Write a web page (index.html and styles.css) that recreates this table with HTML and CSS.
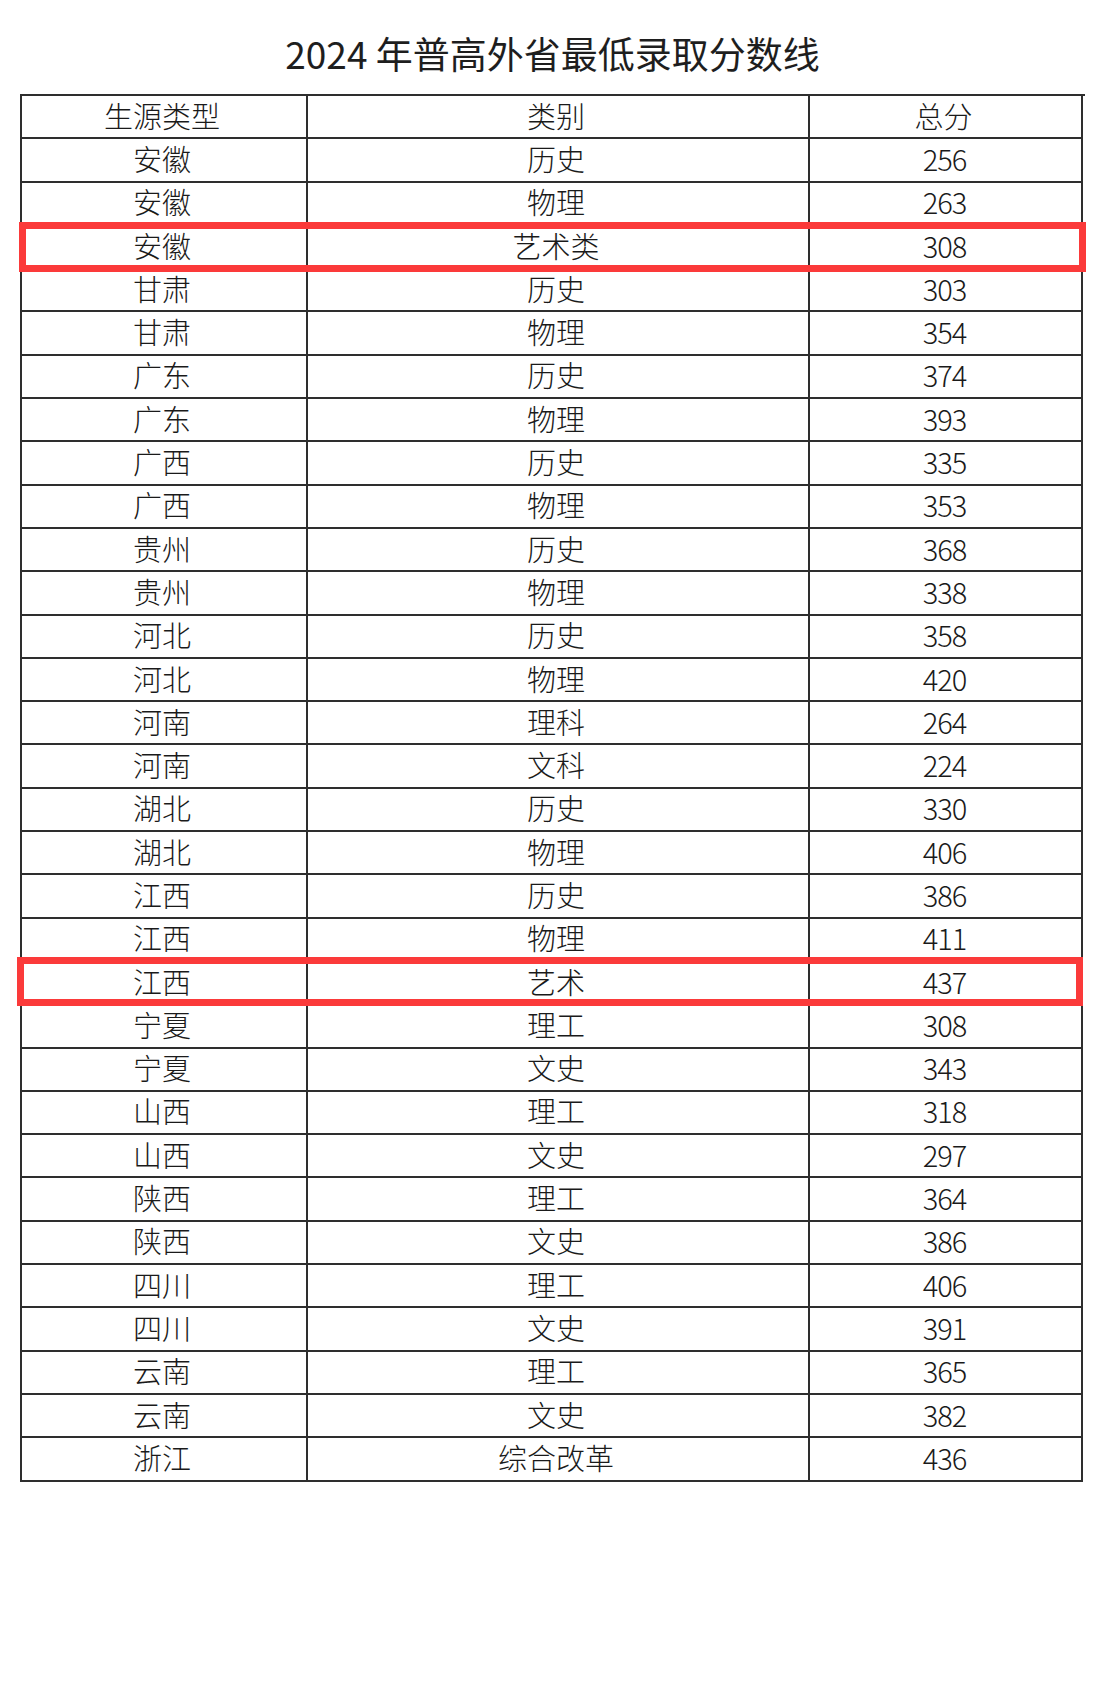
FILE: index.html
```html
<!DOCTYPE html>
<html lang="zh-CN">
<head>
<meta charset="utf-8">
<title>2024 年普高外省最低录取分数线</title>
<link rel="stylesheet" href="styles.css">
</head>
<body>
<div class="page">
  <h1 class="title">2024 年普高外省最低录取分数线</h1>
  <div class="score-table">
    <div class="cell head">生源类型</div><div class="cell head">类别</div><div class="cell head">总分</div>
    <div class="cell">安徽</div><div class="cell">历史</div><div class="cell num">256</div>
    <div class="cell">安徽</div><div class="cell">物理</div><div class="cell num">263</div>
    <div class="cell">安徽</div><div class="cell">艺术类</div><div class="cell num">308</div>
    <div class="cell">甘肃</div><div class="cell">历史</div><div class="cell num">303</div>
    <div class="cell">甘肃</div><div class="cell">物理</div><div class="cell num">354</div>
    <div class="cell">广东</div><div class="cell">历史</div><div class="cell num">374</div>
    <div class="cell">广东</div><div class="cell">物理</div><div class="cell num">393</div>
    <div class="cell">广西</div><div class="cell">历史</div><div class="cell num">335</div>
    <div class="cell">广西</div><div class="cell">物理</div><div class="cell num">353</div>
    <div class="cell">贵州</div><div class="cell">历史</div><div class="cell num">368</div>
    <div class="cell">贵州</div><div class="cell">物理</div><div class="cell num">338</div>
    <div class="cell">河北</div><div class="cell">历史</div><div class="cell num">358</div>
    <div class="cell">河北</div><div class="cell">物理</div><div class="cell num">420</div>
    <div class="cell">河南</div><div class="cell">理科</div><div class="cell num">264</div>
    <div class="cell">河南</div><div class="cell">文科</div><div class="cell num">224</div>
    <div class="cell">湖北</div><div class="cell">历史</div><div class="cell num">330</div>
    <div class="cell">湖北</div><div class="cell">物理</div><div class="cell num">406</div>
    <div class="cell">江西</div><div class="cell">历史</div><div class="cell num">386</div>
    <div class="cell">江西</div><div class="cell">物理</div><div class="cell num">411</div>
    <div class="cell">江西</div><div class="cell">艺术</div><div class="cell num">437</div>
    <div class="cell">宁夏</div><div class="cell">理工</div><div class="cell num">308</div>
    <div class="cell">宁夏</div><div class="cell">文史</div><div class="cell num">343</div>
    <div class="cell">山西</div><div class="cell">理工</div><div class="cell num">318</div>
    <div class="cell">山西</div><div class="cell">文史</div><div class="cell num">297</div>
    <div class="cell">陕西</div><div class="cell">理工</div><div class="cell num">364</div>
    <div class="cell">陕西</div><div class="cell">文史</div><div class="cell num">386</div>
    <div class="cell">四川</div><div class="cell">理工</div><div class="cell num">406</div>
    <div class="cell">四川</div><div class="cell">文史</div><div class="cell num">391</div>
    <div class="cell">云南</div><div class="cell">理工</div><div class="cell num">365</div>
    <div class="cell">云南</div><div class="cell">文史</div><div class="cell num">382</div>
    <div class="cell">浙江</div><div class="cell">综合改革</div><div class="cell num">436</div>
  </div>
  <div class="mark mark-1"></div>
  <div class="mark mark-2"></div>
</div>
</body>
</html>
```
FILE: styles.css
```css
html, body {
  margin: 0;
  padding: 0;
  background: #ffffff;
}

.page {
  position: relative;
  width: 1105px;
  height: 1693px;
  font-family: "Noto Sans CJK SC", "Noto Sans", sans-serif;
  color: #1a1a1a;
}

.title {
  margin: 0;
  padding-top: 35px;
  height: 94px;
  box-sizing: border-box;
  font-size: 37px;
  line-height: 37px;
  font-weight: 400;
  text-align: center;
  color: #1e1e1e;
}

.score-table {
  margin-left: 20px;
  width: 1063px;
  display: grid;
  grid-template-columns: 286px 502px 273px;
  grid-auto-rows: 43.3px;
  border-top: 2px solid #2e2e2e;
  border-left: 2px solid #2e2e2e;
}

.cell {
  box-sizing: border-box;
  border-right: 2px solid #2e2e2e;
  border-bottom: 2px solid #2e2e2e;
  display: flex;
  align-items: center;
  justify-content: center;
  font-size: 29px;
  line-height: 29px;
  font-weight: 300;
  padding-bottom: 3px;
  padding-right: 4px;
  white-space: nowrap;
}

.num {
  letter-spacing: -1px;
  padding-right: 2px;
}

.mark {
  position: absolute;
  box-sizing: border-box;
  border: 7px solid #fb3a3a;
}

.mark-1 {
  left: 19px;
  top: 222px;
  width: 1067px;
  height: 50px;
}

.mark-2 {
  left: 17px;
  top: 957px;
  width: 1066px;
  height: 49px;
}
```
